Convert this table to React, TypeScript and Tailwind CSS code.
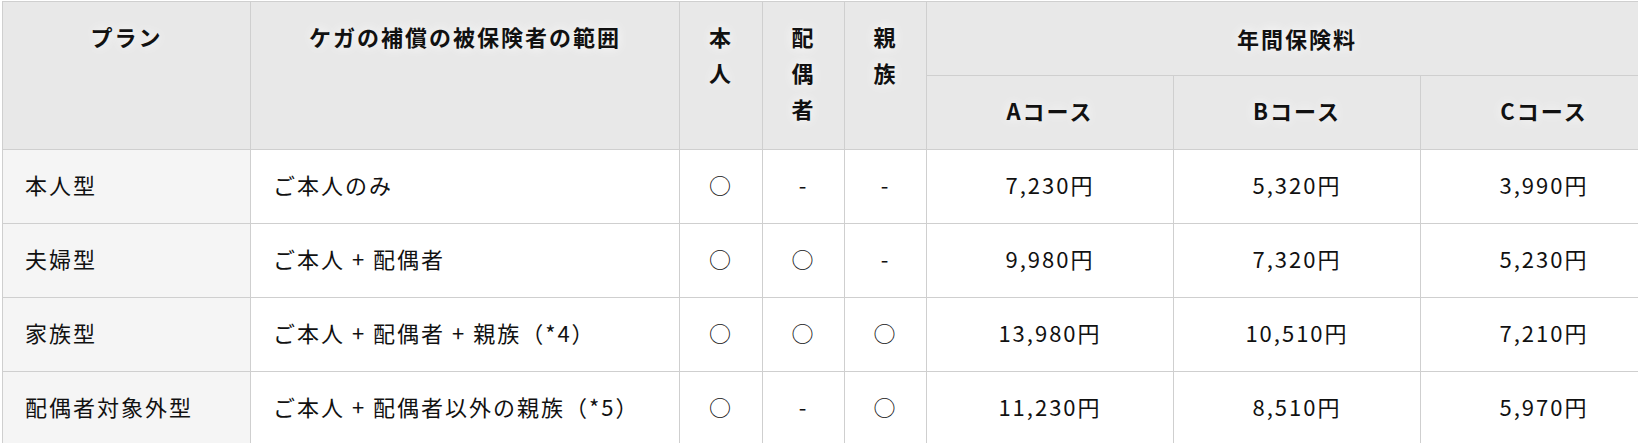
const rows = [
  { plan: "本人型", scope: "ご本人のみ", a: "○", b: "-", c: "-", p: ["7,230円", "5,320円", "3,990円"] },
  { plan: "夫婦型", scope: "ご本人 + 配偶者", a: "○", b: "○", c: "-", p: ["9,980円", "7,320円", "5,230円"] },
  { plan: "家族型", scope: "ご本人 + 配偶者 + 親族（*4）", a: "○", b: "○", c: "○", p: ["13,980円", "10,510円", "7,210円"] },
  { plan: "配偶者対象外型", scope: "ご本人 + 配偶者以外の親族（*5）", a: "○", b: "-", c: "○", p: ["11,230円", "8,510円", "5,970円"] },
];

export default function App() {
  const th = "border border-[#cfcfcf] bg-[#e8e8e8] font-bold [text-shadow:0_0_12px_#fff]";
  const td = "border border-[#cfcfcf] align-middle pb-[6px]";
  return (
    <div className="w-[1638px] h-[443px] overflow-hidden bg-white font-['Noto_Sans_CJK_JP',sans-serif] text-[#111]">
      <table className="table-fixed border-collapse ml-[2px] mt-[1px] w-[1665px] text-[22px] tracking-[2px] leading-[36px]">
        <colgroup>
          <col className="w-[248px]" />
          <col className="w-[429px]" />
          <col className="w-[83px]" />
          <col className="w-[82px]" />
          <col className="w-[82px]" />
          <col className="w-[247px]" />
          <col className="w-[247px]" />
          <col className="w-[247px]" />
        </colgroup>
        <thead>
          <tr className="h-[74px]">
            <th rowSpan={2} className={`${th} align-top pt-[16px]`}>プラン</th>
            <th rowSpan={2} className={`${th} align-top pt-[16px]`}>ケガの補償の被保険者の範囲</th>
            <th rowSpan={2} className={`${th} align-top pt-[16px]`}>本<br />人</th>
            <th rowSpan={2} className={`${th} align-top pt-[16px]`}>配<br />偶<br />者</th>
            <th rowSpan={2} className={`${th} align-top pt-[16px]`}>親<br />族</th>
            <th colSpan={3} className={`${th} align-middle pb-[2px]`}>年間保険料</th>
          </tr>
          <tr className="h-[74px]">
            <th className={`${th} align-middle pb-[5px]`}>Aコース</th>
            <th className={`${th} align-middle pb-[5px]`}>Bコース</th>
            <th className={`${th} align-middle pb-[5px]`}>Cコース</th>
          </tr>
        </thead>
        <tbody>
          {rows.map((r) => (
            <tr key={r.plan} className="h-[74px]">
              <td className={`${td} bg-[#f5f5f5] pl-[22px]`}>{r.plan}</td>
              <td className={`${td} pl-[22px]`}>{r.scope}</td>
              <td className={`${td} text-center`}>{r.a}</td>
              <td className={`${td} text-center`}>{r.b}</td>
              <td className={`${td} text-center`}>{r.c}</td>
              {r.p.map((v, i) => (
                <td key={i} className={`${td} text-center`}>{v}</td>
              ))}
            </tr>
          ))}
        </tbody>
      </table>
    </div>
  );
}
